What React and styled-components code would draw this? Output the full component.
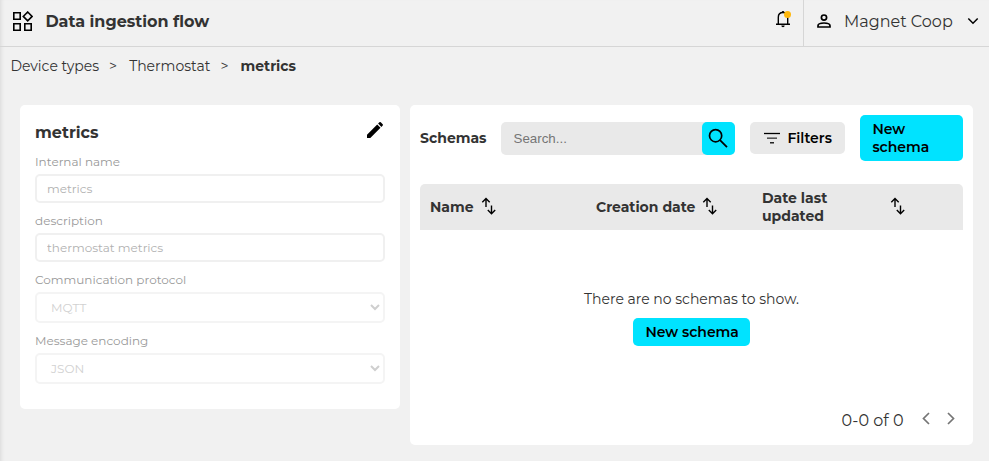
import React from 'react';
import styled, { createGlobalStyle } from 'styled-components';

const Global = createGlobalStyle`
  * { box-sizing: border-box; }
  body {
    margin: 0;
    background: #f1f1f1;
    color: #333;
    font: 400 14px/18px Montserrat, "Open Sans", sans-serif;
  }
  button, input, select { font-family: inherit; margin: 0; }
  svg { display: block; flex: none; }
`;
const Page = styled.div`
  height: 461px;
  overflow: hidden;
  box-shadow: inset 4px 0 4px -3px rgba(0, 0, 0, 0.1);
`;
const Header = styled.header`
  display: flex;
  height: 47px;
  border-bottom: 1px solid #d6d6d6;
`;
const Brand = styled.div`
  display: flex;
  flex: 1;
  align-items: center;
  gap: 12px;
  padding: 0 0 2px 12px;
`;
const Title = styled.h1`
  margin: 0;
  padding-left: 0.4px;
  font-size: 16px;
  font-weight: 700;
  line-height: 20px;
`;
const Bell = styled.div`
  position: relative;
  width: 29px;
  padding-top: 10px;
`;
const Dot = styled.span`
  position: absolute;
  top: 11px;
  left: 10px;
  width: 7px;
  height: 7px;
  border-radius: 50%;
  background: #ffb80c;
`;
const Account = styled.div`
  display: flex;
  align-items: center;
  width: 186px;
  padding: 0 10px 4px 13px;
  border-left: 1px solid #d6d6d6;
  font-size: 16px;
`;
const AccountName = styled.span`
  flex: 1;
  padding: 2px 0 0 13px;
`;
const Crumbs = styled.nav`
  display: flex;
  gap: 10px;
  height: 58px;
  padding: 10px 10.4px 0;
`;
const Crumb = styled.span`
  font-weight: ${(p) => (p.$current ? 700 : 400)};
  padding-right: ${(p) => (p.$gap ? 2 : 0)}px;
`;
const Columns = styled.main`
  display: grid;
  grid-template-columns: 380px 563px;
  gap: 10px;
  align-items: start;
  padding-left: 20px;
`;
const Card = styled.section`
  display: flex;
  flex-direction: column;
  height: ${(p) => p.$height}px;
  padding: ${(p) => p.$pad};
  border-radius: 5px;
  background: #fff;
`;
const CardHead = styled.div`
  display: flex;
  justify-content: space-between;
  height: 34px;
  padding-right: 1px;
`;
const CardTitle = styled.h2`
  margin: 3px 0 0;
  font-size: 16px;
  line-height: 20px;
`;
const Field = styled.label`
  display: flex;
  flex-direction: column;
  gap: 5px;
  margin-bottom: 10px;
  color: #999;
  font-size: 12px;
  line-height: 15px;
`;
const Input = styled.input`
  height: 29px;
  padding: 0 10px;
  border: 2px solid #f0f0f0;
  border-radius: 5px;
  background: #fff;
  color: #b1b1b1;
  font-size: 12px;
`;
const SelectBox = styled.div`
  display: flex;
  align-items: center;
  justify-content: space-between;
  height: 31px;
  padding: 0 3px 0 14px;
  border: 2px solid #f4f4f4;
  border-radius: 5px;
  color: #d1d1d1;
`;
const Toolbar = styled.div`
  display: flex;
  align-items: center;
  height: 46px;
`;
const ToolbarTitle = styled.h2`
  width: 81px;
  margin: 0;
  font-size: 14px;
`;
const Search = styled.div`
  display: flex;
  width: 234px;
  height: 33px;
  margin: 0 15px 0 0;
  border-radius: 5px;
  background: #e9e9e9;
`;
const SearchInput = styled.input`
  flex: 1;
  min-width: 0;
  padding: 0 12.5px;
  border: 0;
  background: none;
  font: 13.333px "Liberation Sans", Arial, sans-serif;
  &::placeholder { color: #757575; }
`;
const Button = styled.button`
  display: flex;
  align-items: center;
  justify-content: ${(p) => (p.$icon ? 'center' : 'flex-start')};
  gap: 7px;
  width: ${(p) => p.$w}px;
  height: ${(p) => p.$h}px;
  padding: 0 0 0 ${(p) => (p.$icon ? 0 : 12.4)}px;
  border: 0;
  border-radius: 5px;
  background: ${(p) => (p.$muted ? '#e9e9e9' : '#00e3ff')};
  color: #000;
  font-size: 14px;
  font-weight: 600;
  line-height: 18px;
  text-align: left;
  white-space: ${(p) => (p.$wrap ? 'normal' : 'nowrap')};
`;
const ToolbarEnd = styled.div`
  margin-left: 15px;
`;
const WrapLabel = styled.span`
  width: 70px;
`;
const TableHead = styled.div`
  display: flex;
  height: 46px;
  margin-top: 23px;
  padding-left: 10px;
  border-radius: 5px 5px 0 0;
  background: #e9e9e9;
  font-weight: 700;
`;
const HeadCell = styled.div`
  display: flex;
  align-items: center;
  width: 166px;
  gap: 7px;
`;
const HeadLabel = styled.span`
  max-width: 121px;
`;
const SortIcon = styled.svg`
  margin-top: -2px;
`;
const Empty = styled.div`
  display: flex;
  flex: 1;
  flex-direction: column;
  align-items: center;
  gap: 10px;
  padding-top: 60px;
`;
const Pager = styled.div`
  display: flex;
  align-items: center;
  justify-content: flex-end;
  height: 30px;
  padding: 2px 8.5px 0 0;
  font-size: 16px;
`;
const PagerArrows = styled.div`
  display: flex;
  gap: 17px;
  margin: -5px 0 0 18px;
`;

const Sort = () => (
  <SortIcon width="16" height="18" viewBox="0 0 16 18" fill="none" stroke="#000" strokeWidth="1.4">
    <path d="M5 10V1.5M1.3 5.2 5 1.5l3.7 3.7M10.5 8.5v8.2M6.8 13l3.7 3.7 3.7-3.7" />
  </SortIcon>
);
const Chevron = ({ dir }) => (
  <svg width="8" height="13" viewBox="0 0 8 13" fill="none" stroke="#757575" strokeWidth="1.7">
    <path d={dir === 'left' ? 'M7 1 1.5 6.5 7 12' : 'M1 1l5.5 5.5L1 12'} />
  </svg>
);
const Select = ({ value }) => (
  <SelectBox>
    {value}
    <svg width="10" height="7" viewBox="0 0 10 7" fill="none" stroke="#cfcfcf" strokeWidth="2">
      <path d="M1 1l4 4 4-4" />
    </svg>
  </SelectBox>
);

export default function App() {
  return (
    <Page>
      <Global />
      <Header>
        <Brand>
          <svg width="21" height="22" viewBox="0 0 21 22" fill="none" stroke="#000" strokeWidth="1.6">
            <path d="M1.8 1.8h6.4v6.4H1.8zM1.8 12.8h6.4v6.4H1.8zM12.8 12.8h6.4v6.4h-6.4zM15.7 1l4.4 4.4-4.4 4.4-4.4-4.4z" />
          </svg>
          <Title>Data ingestion flow</Title>
        </Brand>
        <Bell>
          <svg width="17" height="18" viewBox="0 0 17 18" fill="none" stroke="#000" strokeWidth="1.4">
            <path d="M4.3 14V7.3C4.3 4.5 6 2.5 9 2.5s4.7 2 4.7 4.8V14M2 14.2h14" />
            <path d="M7.3 15.5h3.4a1.7 1.7 0 0 1-3.4 0zM7.8 2.3a1.2 1.2 0 0 1 2.4 0z" fill="#000" stroke="none" />
          </svg>
          <Dot />
        </Bell>
        <Account>
          <svg width="14" height="14" viewBox="0 0 14 14" fill="none" stroke="#000" strokeWidth="1.7">
            <circle cx="7" cy="3.6" r="2.6" />
            <path d="M1 13v-1.3C1 9.8 4.3 9 7 9s6 .8 6 2.7V13z" />
          </svg>
          <AccountName>Magnet Coop</AccountName>
          <svg width="12" height="8" viewBox="0 0 12 8" fill="none" stroke="#000" strokeWidth="1.5">
            <path d="M1.3 1.5 6 6.2l4.7-4.7" />
          </svg>
        </Account>
      </Header>
      <Crumbs>
        <Crumb>Device types</Crumb>
        <Crumb $gap>&gt;</Crumb>
        <Crumb>Thermostat</Crumb>
        <Crumb $gap>&gt;</Crumb>
        <Crumb $current>metrics</Crumb>
      </Crumbs>
      <Columns>
        <Card $height={304} $pad="15px">
          <CardHead>
            <CardTitle>metrics</CardTitle>
            <svg width="18" height="19" viewBox="0 0 18 19">
              <path d="M1 18v-3.3L11.2 4.5l3.3 3.3L4.3 18zM12.1 3.6l1.3-1.3a1 1 0 0 1 1.4 0l1.9 1.9a1 1 0 0 1 0 1.4l-1.3 1.3z" />
            </svg>
          </CardHead>
          <Field>Internal name<Input defaultValue="metrics" disabled /></Field>
          <Field>description<Input defaultValue="thermostat metrics" disabled /></Field>
          <Field as="div">Communication protocol<Select value="MQTT" /></Field>
          <Field as="div">Message encoding<Select value="JSON" /></Field>
        </Card>
        <Card $height={340} $pad="10px">
          <Toolbar>
            <ToolbarTitle>Schemas</ToolbarTitle>
            <Search>
              <SearchInput placeholder="Search..." />
              <Button $icon $w={33} $h={33} aria-label="Search">
                <svg width="21" height="21" viewBox="0 0 21 21" fill="none" stroke="#000" strokeWidth="1.7">
                  <circle cx="7.6" cy="7.7" r="6.1" />
                  <path d="M12 12.1l7 7" />
                </svg>
              </Button>
            </Search>
            <Button $muted $w={95} $h={32}>
              <svg width="18" height="12" viewBox="0 0 18 12" fill="none">
                <path d="M2 1.5h16" stroke="#000" strokeWidth="1.3" />
                <path d="M5 6.2h10" stroke="#555" strokeWidth="1.6" />
                <path d="M8 10.8h4" stroke="#000" strokeWidth="1.3" />
              </svg>
              Filters
            </Button>
            <ToolbarEnd>
              <Button $wrap $w={103} $h={46}><WrapLabel>New schema</WrapLabel></Button>
            </ToolbarEnd>
          </Toolbar>
          <TableHead>
            {['Name', 'Creation date', 'Date last updated'].map((name) => (
              <HeadCell key={name}><HeadLabel>{name}</HeadLabel><Sort /></HeadCell>
            ))}
          </TableHead>
          <Empty>
            <span>There are no schemas to show.</span>
            <Button $w={117} $h={28}>New schema</Button>
          </Empty>
          <Pager>
            0-0 of 0
            <PagerArrows><Chevron dir="left" /><Chevron dir="right" /></PagerArrows>
          </Pager>
        </Card>
      </Columns>
    </Page>
  );
}
